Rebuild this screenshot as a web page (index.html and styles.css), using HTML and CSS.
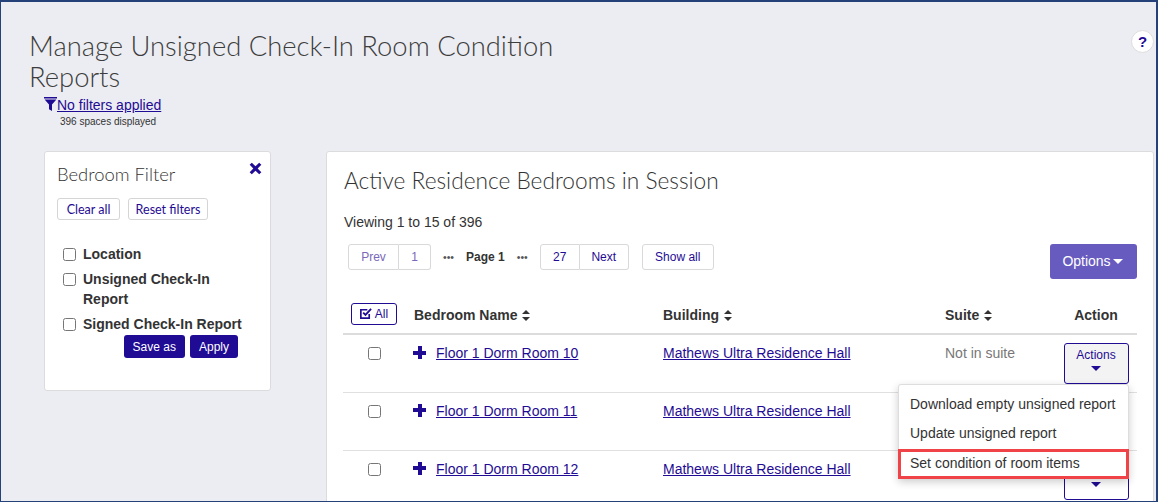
FILE: index.html
```html
<!DOCTYPE html>
<html lang="en">
<head>
    <meta charset="UTF-8">
    <title>Manage Unsigned Check-In Room Condition Reports</title>
    <link rel="stylesheet" href="styles.css">
</head>
<body>
<div class="page">
    <div class="page-head">
        <div class="head-left">
            <h1>Manage Unsigned Check-In Room Condition Reports</h1>
            <div class="filter-status">
                <svg class="funnel" viewBox="0 0 13 14"><path d="M0 0h13v1.4H0zM.6 2.4h11.8L8 7.6V14L5 12.2V7.6z"/></svg>
                <a href="#">No filters applied</a>
            </div>
            <p class="spaces-count">396 spaces displayed</p>
        </div>
        <button type="button" class="help-btn">?</button>
    </div>

    <div class="content">
        <aside class="filter-card">
            <div class="filter-title">
                <h2>Bedroom Filter</h2>
                <svg class="close-icon" viewBox="0 0 12 12"><path d="M2.6.6 6 4l3.4-3.4 2 2L8 6l3.4 3.4-2 2L6 8l-3.4 3.4-2-2L4 6 .6 2.6z"/></svg>
            </div>
            <div class="filter-links">
                <button type="button" class="btn-outline clear-btn">Clear all</button>
                <button type="button" class="btn-outline reset-btn">Reset filters</button>
            </div>
            <ul class="filter-list">
                <li><input type="checkbox"><label>Location</label></li>
                <li><input type="checkbox"><label>Unsigned Check-In Report</label></li>
                <li><input type="checkbox"><label>Signed Check-In Report</label></li>
            </ul>
            <div class="filter-actions">
                <button type="button" class="btn-solid">Save as</button>
                <button type="button" class="btn-solid">Apply</button>
            </div>
        </aside>

        <main class="main-card">
            <h2 class="main-title">Active Residence Bedrooms in Session</h2>
            <p class="viewing">Viewing 1 to 15 of 396</p>

            <div class="toolbar">
                <div class="pager">
                    <div class="pager-group">
                        <span class="pager-item muted prev">Prev</span>
                        <span class="pager-item muted one">1</span>
                    </div>
                    <span class="dots">•••</span>
                    <strong class="current">Page 1</strong>
                    <span class="dots">•••</span>
                    <div class="pager-group">
                        <a class="pager-item last" href="#">27</a>
                        <a class="pager-item next" href="#">Next</a>
                    </div>
                    <a class="pager-item show-all" href="#">Show all</a>
                </div>
                <button type="button" class="options-btn">Options<span class="caret"></span></button>
            </div>

            <table class="rooms">
                <thead>
                    <tr>
                        <th class="col-check"><button type="button" class="all-btn">
                            <svg viewBox="0 0 14 14"><path d="M11 7.5V12H2V3h7" fill="none" stroke="currentColor" stroke-width="1.8"/><path d="M4.5 6 7 8.5 13 2" fill="none" stroke="currentColor" stroke-width="2"/></svg>
                            All</button></th>
                        <th class="col-name">Bedroom Name <span class="sort"></span></th>
                        <th class="col-building">Building <span class="sort"></span></th>
                        <th class="col-suite">Suite <span class="sort"></span></th>
                        <th class="col-action">Action</th>
                    </tr>
                </thead>
                <tbody>
                    <tr>
                        <td class="col-check"><input type="checkbox"></td>
                        <td><span class="plus"></span><a href="#">Floor 1 Dorm Room 10</a></td>
                        <td><a href="#">Mathews Ultra Residence Hall</a></td>
                        <td class="suite">Not in suite</td>
                        <td class="col-action"><button type="button" class="actions-btn open">Actions<span class="caret"></span></button></td>
                    </tr>
                    <tr>
                        <td class="col-check"><input type="checkbox"></td>
                        <td><span class="plus"></span><a href="#">Floor 1 Dorm Room 11</a></td>
                        <td><a href="#">Mathews Ultra Residence Hall</a></td>
                        <td class="suite"></td>
                        <td class="col-action"></td>
                    </tr>
                    <tr>
                        <td class="col-check"><input type="checkbox"></td>
                        <td><span class="plus"></span><a href="#">Floor 1 Dorm Room 12</a></td>
                        <td><a href="#">Mathews Ultra Residence Hall</a></td>
                        <td class="suite"></td>
                        <td class="col-action"><button type="button" class="actions-btn">Actions<span class="caret"></span></button></td>
                    </tr>
                </tbody>
            </table>

            <div class="actions-menu">
                <a href="#">Download empty unsigned report</a>
                <a href="#">Update unsigned report</a>
                <a href="#" class="marked">Set condition of room items</a>
            </div>
        </main>
    </div>
</div>
</body>
</html>
```

FILE: styles.css
```css
* {
    box-sizing: border-box;
}

html, body {
    margin: 0;
    height: 100%;
    overflow: hidden;
}

body {
    font-family: "Liberation Sans", Arial, sans-serif;
    color: #333;
}

a {
    color: #1f0b94;
}

.page {
    width: 1158px;
    height: 502px;
    overflow: hidden;
    background: #ecedf2;
    border: 1px solid #24417a;
    border-width: 2px 2px 1px 1px;
    padding: 28px 4px 0 28px;
}

/* Page heading */
.page-head {
    display: flex;
    justify-content: space-between;
}

.head-left {
    width: 560px;
}

h1 {
    margin: 0;
    font-family: Lato, sans-serif;
    font-weight: 300;
    font-size: 27.4px;
    line-height: 31px;
    color: #3d3d3d;
}

.filter-status {
    display: flex;
    align-items: center;
    margin: 4px 0 0 15px;
    font-size: 14px;
    line-height: 18px;
}

.funnel {
    width: 13px;
    height: 14px;
    fill: #1f0b94;
    margin-bottom: 3px;
}

.spaces-count {
    margin: 1px 0 0 31px;
    font-size: 10px;
    line-height: 14px;
}

.help-btn {
    width: 23px;
    height: 23px;
    margin: 0 -2px 0 0;
    padding: 0;
    border: 1px solid #ddd;
    border-radius: 50%;
    background: #fff;
    color: #1f0b94;
    font-family: inherit;
    font-size: 15px;
    font-weight: bold;
}

.content {
    display: flex;
    gap: 55px;
    margin-top: 22px;
    margin-left: 15px;
}

/* Filter card */
.filter-card {
    flex: none;
    width: 227px;
    height: 240px;
    padding: 11px 12px;
    background: #fff;
    border: 1px solid #dcdcdc;
    border-radius: 3px;
}

.filter-title {
    display: flex;
    justify-content: space-between;
}

.filter-title h2 {
    margin: 0;
    font-family: Lato, sans-serif;
    font-weight: 300;
    font-size: 18.4px;
    line-height: 22px;
    color: #333;
}

.close-icon {
    width: 13px;
    height: 13px;
    margin: -1px -4px 0 0;
    fill: #1f0b94;
}

.filter-links {
    display: flex;
    gap: 8px;
    margin-top: 13px;
}

.btn-outline {
    height: 22px;
    padding: 0;
    background: #fff;
    border: 1px solid #d5d5d5;
    border-radius: 3px;
    color: #1f0b94;
    font-family: Lato, sans-serif;
    font-size: 12.5px;
}

.clear-btn {
    width: 63px;
}

.reset-btn {
    width: 80px;
}

.filter-list {
    list-style: none;
    margin: 24px 0 0;
    padding: 0 0 0 6px;
    font-size: 14px;
    line-height: 20px;
    font-weight: bold;
}

.filter-list li {
    display: flex;
    margin-bottom: 5px;
}

.filter-list input {
    flex: none;
    width: 13px;
    height: 13px;
    margin: 4px 7px 0 0;
}

.filter-actions {
    display: flex;
    justify-content: flex-end;
    gap: 5px;
    margin: -4px 20px 0 0;
}

.btn-solid {
    height: 23px;
    padding: 0 9px;
    background: #1f0b94;
    border: none;
    border-radius: 3px;
    color: #fff;
    font-family: inherit;
    font-size: 12px;
}

/* Main card */
.main-card {
    position: relative;
    flex: none;
    width: 828px;
    height: 400px;
    padding: 15px 16px 0 17px;
    background: #fff;
    border: 1px solid #dcdcdc;
    border-radius: 3px;
}

.main-title {
    margin: 0;
    font-family: Lato, sans-serif;
    font-weight: 300;
    font-size: 22.7px;
    line-height: 27px;
    color: #333;
}

.viewing {
    margin: 18px 0 0;
    font-size: 14px;
    line-height: 20px;
}

.toolbar {
    display: flex;
    justify-content: space-between;
    margin-top: 12px;
}

.pager {
    display: flex;
    align-items: center;
    height: 26px;
    margin-left: 4px;
    font-size: 12px;
}

.pager-group {
    display: flex;
}

.pager-item {
    display: block;
    height: 26px;
    line-height: 24px;
    text-align: center;
    background: #fff;
    border: 1px solid #d9d9d9;
    color: #1f0b94;
    text-decoration: none;
}

.pager-item.prev {
    width: 51px;
    border-radius: 3px 0 0 3px;
}

.pager-item.one {
    width: 32px;
    border-left: none;
    border-radius: 0 3px 3px 0;
}

.pager-item.last {
    width: 40px;
    border-radius: 3px 0 0 3px;
}

.pager-item.next {
    width: 49px;
    border-left: none;
    border-radius: 0 3px 3px 0;
}

.pager-item.muted {
    color: #7a68b8;
}

.dots {
    margin: 0 12px;
    font-size: 10.5px;
    color: #555;
}

.current {
    color: #333;
}

.show-all {
    width: 72px;
    margin-left: 13px;
    border-radius: 3px;
}

.options-btn {
    width: 87px;
    height: 35px;
    padding: 0 2px 2px 0;
    background: #675bbf;
    border: none;
    border-radius: 3px;
    color: #fff;
    font-family: inherit;
    font-size: 14px;
}

.options-btn .caret {
    display: inline-block;
    margin-left: 2px;
    vertical-align: 2px;
    border: 5px solid transparent;
    border-top-color: #fff;
    border-bottom: none;
}

/* Table */
.rooms {
    width: 794px;
    margin: 9px 0 0 -1px;
    border-collapse: collapse;
    table-layout: fixed;
    font-size: 14px;
}

.rooms th {
    height: 46px;
    padding: 8px 0 0;
    text-align: left;
    font-size: 14px;
    vertical-align: middle;
    border-bottom: 2px solid #dcdcdc;
    color: #333;
}

.rooms td {
    height: 58px;
    padding: 10px 0 0;
    vertical-align: top;
    border-bottom: 1px solid #e0e0e0;
}

.rooms .col-check {
    width: 71px;
    padding-right: 8px;
    text-align: center;
}

.col-name {
    width: 249px;
}

.col-building {
    width: 282px;
}

.col-suite {
    width: 110px;
}

.rooms .col-action {
    text-align: center;
}

.rooms td.col-action {
    padding-top: 8px;
}

.col-check input {
    width: 13px;
    height: 13px;
    margin: 2px 0 0;
}

.all-btn {
    display: inline-flex;
    align-items: center;
    justify-content: center;
    gap: 3px;
    width: 46px;
    height: 22px;
    margin: 0 0 2px -2px;
    padding: 0;
    background: #fff;
    border: 1px solid #1f0b94;
    border-radius: 3px;
    color: #1f0b94;
    font-family: inherit;
    font-size: 12px;
}

.all-btn svg {
    width: 13px;
    height: 13px;
}

.sort {
    position: relative;
    display: inline-block;
    width: 8px;
    height: 10px;
    margin-left: 1px;
    vertical-align: -1px;
}

.sort::before, .sort::after {
    content: "";
    position: absolute;
    left: 0;
    border: 4px solid transparent;
}

.sort::before {
    top: -0.5px;
    border-top: none;
    border-bottom: 4.5px solid #333;
}

.sort::after {
    bottom: -0.5px;
    border-bottom: none;
    border-top: 4.5px solid #333;
}

.plus {
    display: inline-block;
    width: 13px;
    height: 13px;
    margin: 0 10px 0 -1px;
    vertical-align: -1px;
    background:
        linear-gradient(#1f0b94, #1f0b94) center / 13px 4px no-repeat,
        linear-gradient(#1f0b94, #1f0b94) center / 4px 13px no-repeat;
}

.suite {
    color: #777;
}

.actions-btn {
    width: 65px;
    height: 41px;
    margin: 0;
    padding: 0 0 8px;
    background: #fff;
    border: 1px solid #1f0b94;
    border-radius: 3px;
    color: #1f0b94;
    font-family: inherit;
    font-size: 12px;
}

.actions-btn.open {
    background: #f3f3f3;
}

.actions-btn .caret {
    display: block;
    width: 0;
    margin: 4px auto 0;
    border: 5px solid transparent;
    border-top-color: #1f0b94;
    border-bottom: none;
}

/* Dropdown over the table */
.actions-menu {
    position: absolute;
    top: 232px;
    left: 571px;
    width: 231px;
    padding: 5px 0 0;
    background: #fff;
    border: 1px solid #ddd;
    border-radius: 3px;
    box-shadow: 0 3px 8px rgba(0, 0, 0, 0.2);
    font-size: 14px;
}

.actions-menu a {
    display: block;
    height: 29px;
    line-height: 29px;
    padding-left: 11px;
    color: #333;
    text-decoration: none;
}

.actions-menu .marked {
    height: 30px;
    margin: 1px -1px -1px;
    padding-left: 9px;
    line-height: 23px;
    border: 3px solid #f04348;
}
```
